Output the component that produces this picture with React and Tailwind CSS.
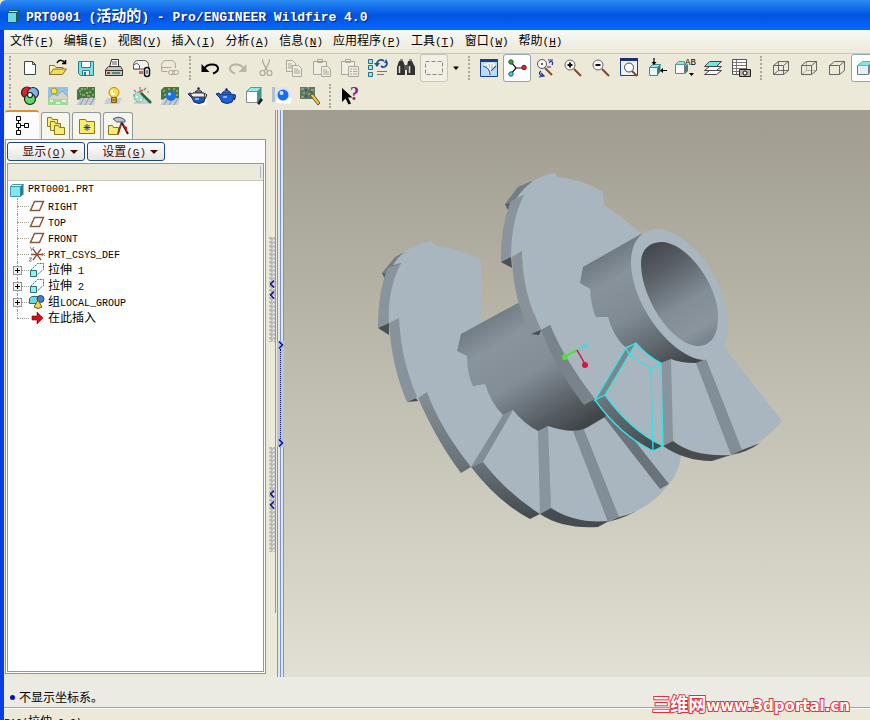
import React from 'react';

const LATIN = "font-['Liberation_Mono',monospace] text-[10px]";
const ACCEL = "font-['Liberation_Mono',monospace] text-[11px]";

const MENUS = [
  ['文件', 'F'], ['编辑', 'E'], ['视图', 'V'], ['插入', 'I'], ['分析', 'A'], ['信息', 'N'],
  ['应用程序', 'P'], ['工具', 'T'], ['窗口', 'W'], ['帮助', 'H'],
];

const TREE = [
  { icon: 'plane', latin: 'RIGHT' },
  { icon: 'plane', latin: 'TOP' },
  { icon: 'plane', latin: 'FRONT' },
  { icon: 'csys', latin: 'PRT_CSYS_DEF' },
  { icon: 'extrude', text: '拉伸', latin: ' 1', expandable: true },
  { icon: 'extrude', text: '拉伸', latin: ' 2', expandable: true },
  { icon: 'group', text: '组', latin: 'LOCAL_GROUP', expandable: true },
  { icon: 'insert', text: '在此插入' },
];

// All toolbar drawings share a 20x20 box
const ICONS = {
  new: <path d="M4.5 3.5h8l3 3v10h-11zM12.5 3.5v3h3" fill="#fff" stroke="#444" />,
  open: (
    <>
      <path d="M1.5 16.5v-9h5l1.5 2h7v3" fill="#fdf6b0" stroke="#8a7420" />
      <path d="M1.5 16.5l4-5.5h13l-4 5.5z" fill="#f2dc5a" stroke="#8a7420" />
      <path d="M9 5c2-4 6-3 8 0M17.5 2v3.5h-3.5" fill="none" stroke="#000" strokeWidth="1.5" />
    </>
  ),
  save: (
    <>
      <path d="M2.5 3.5h15v14h-13l-2-2z" fill="#7fe0e6" stroke="#2b7c8c" />
      <path d="M5.5 3.5h9v6h-9z" fill="#fff" stroke="#2b7c8c" />
      <path d="M6.5 12.5h7v5h-7z" fill="#eef" stroke="#2b7c8c" />
      <path d="M8 14h2v3h-2z" fill="#2b7c8c" />
    </>
  ),
  print: (
    <>
      <path d="M7.5 1.5h7v8h-9z" fill="#fff" stroke="#333" />
      <path d="M8 4h5M8 6h5" stroke="#555" />
      <path d="M1.5 11.5l3-3h12l2 3v6h-17z" fill="#c8c6bc" stroke="#333" />
      <path d="M2 12.5h16" stroke="#333" />
      <path d="M3 14h3v2h-3z" fill="#c22" />
      <path d="M8 14h8v2h-8z" fill="#4a8f7a" />
    </>
  ),
  mail: (
    <>
      <path d="M1.5 11V7.5q0-5 5-5h5q5 0 5 5V11z" fill="#f4f2ea" stroke="#555" />
      <path d="M7.5 11V7.5q-3-4-6 0V11z" fill="#fff" stroke="#555" />
      <path d="M7 13h4v3h-4z" fill="#c66" />
      <rect x="12.5" y="9.5" width="5" height="9" rx="2.5" fill="#fff" stroke="#111" strokeWidth="1.5" />
      <path d="M15 12v4" stroke="#111" />
    </>
  ),
  mailLink: (
    <g fill="none" stroke="#aaa798">
      <path d="M1.5 13V7.5q0-5 5-5h4q5 0 5 5V10M1.5 9.5h10M1.5 13.5h6" />
      <rect x="8.5" y="12.5" width="6" height="4" rx="2" />
      <rect x="12.5" y="12.5" width="6" height="4" rx="2" />
    </g>
  ),
  undo: (
    <>
      <path d="M4 11c3-6 14-6 14-.5 0 2-2 4-5 5" fill="none" stroke="#000" strokeWidth="2" />
      <path d="M1.5 6v8h8z" fill="#000" />
    </>
  ),
  redo: (
    <>
      <path d="M16 11c-3-6-14-6-14-.5 0 2 2 4 5 5" fill="none" stroke="#b8b5a5" strokeWidth="2" />
      <path d="M18.5 6v8h-8z" fill="#b8b5a5" />
    </>
  ),
  cut: (
    <g fill="none" stroke="#aaa798" strokeWidth="1.2">
      <path d="M6.5 1.5c0 4 2 6 5 11M13.5 1.5c0 4-2 6-5 11" />
      <circle cx="6.5" cy="15" r="2.5" />
      <circle cx="13.5" cy="15" r="2.5" />
    </g>
  ),
  copy: (
    <g fill="#f0eee2" stroke="#aaa798">
      <path d="M2.5 2.5h6l3 3v8h-9zM4 6h4M4 8h5M4 10h5" />
      <path d="M8.5 7.5h6l3 3v8h-9zM10 11h4M10 13h6M10 15h6" />
    </g>
  ),
  paste: (
    <g fill="#f0eee2" stroke="#aaa798">
      <path d="M1.5 3.5h13v13h-13zM5.5 1.5h5v3h-5z" />
      <path d="M9.5 8.5h6l3 3v7h-9zM11 12h4M11 14h6M11 16h6" />
    </g>
  ),
  pasteSpecial: (
    <g fill="#f0eee2" stroke="#aaa798">
      <path d="M1.5 3.5h13v13h-13zM5.5 1.5h5v3h-5z" />
      <path d="M8.5 8.5h10v10h-10zM10 11h2M13 11h4M10 13.5h2M13 13.5h4M10 16h2M13 16h4" />
    </g>
  ),
  regen: (
    <>
      <path d="M.5 1.5h4v4h-4zM.5 7.5h4v4h-4zM.5 14.5h4v4h-4z" fill="#8ff0f0" stroke="#2b6c7c" />
      <path d="M9 6c0-4 4-5 7-3M19 5c0 4-4 5-6 3" fill="none" stroke="#1f4f9c" strokeWidth="1.8" />
      <path d="M6 5h6l-3 4zM16 5h4l-2-4z" fill="#1f4f9c" />
      <path d="M9 13.5h10M9 16.5h7" stroke="#777" />
    </>
  ),
  find: (
    <>
      <path d="M3 3h4l2 5v9h-8v-8zM12 3h4l3 6v8h-8v-9z" fill="#333" />
      <path d="M8 7h4v5h-4z" fill="#555" />
      <path d="M3.5 8v7M13.5 8v7" stroke="#ddd" strokeWidth="1.5" />
      <path d="M4 2h3M13 2h3" stroke="#333" />
    </>
  ),
  select: <path d="M1.5 3.5h17v13h-17z" fill="none" stroke="#8d8b80" strokeDasharray="4 2" />,
  repaint: (
    <>
      <path d="M1.5 1.5h17v17h-17z" fill="#b5dcf8" stroke="#1d3f86" />
      <path d="M1 1h18v3h-18z" fill="#1d3f86" />
      <path d="M3 8Q8 4 15 5L17 9L10 17Q9 10 3 8z" fill="#fff" />
      <path d="M4 8q7 2 7 9M17 8l-5 5" fill="none" stroke="#3a5a7c" strokeWidth="1.2" />
      <path d="M7 7l1 2M10 6l1 4M13 6v5" stroke="#9ab" />
    </>
  ),
  spin: (
    <>
      <path d="M4 4l5 6h8M9 10l-5 6" fill="none" stroke="#111" strokeWidth="1.2" />
      <circle cx="4" cy="4" r="2.2" fill="#3aa04a" stroke="#145c22" />
      <circle cx="17" cy="9.5" r="2.2" fill="#e0242c" stroke="#7c1014" />
      <circle cx="4" cy="16" r="2.2" fill="#4fd0dc" stroke="#146070" />
    </>
  ),
  orient: (
    <>
      <path d="M10 10l7 7" stroke="#8a4a2a" strokeWidth="2" />
      <circle cx="7" cy="6" r="4.5" fill="#f8f8f4" stroke="#555" />
      <circle cx="7" cy="6" r="1" fill="#333" />
      <path d="M13 2h5M14 5c2-3 5-1 3 2M12 9h4M6 13c-3 2-1 5 2 5M4 19l5-1-3-3" fill="none" stroke="#1f2f9c" strokeWidth="1.2" />
    </>
  ),
  zoomIn: (
    <>
      <path d="M11 11l7 7" stroke="#7a4a32" strokeWidth="2" />
      <circle cx="7" cy="7" r="5" fill="#fafaf6" stroke="#666" />
      <path d="M4.5 7h5M7 4.5v5" stroke="#111" strokeWidth="2" />
    </>
  ),
  zoomOut: (
    <>
      <path d="M11 11l7 7" stroke="#7a4a32" strokeWidth="2" />
      <circle cx="7" cy="7" r="5" fill="#fafaf6" stroke="#666" />
      <path d="M4.5 7h5" stroke="#111" strokeWidth="2" />
    </>
  ),
  refit: (
    <>
      <path d="M1.5 1.5h17v16h-17z" fill="#eef2fa" stroke="#1d3f86" />
      <path d="M1 0h18v3h-18z" fill="#1d2f76" />
      <path d="M13 13l5 5" stroke="#7a4a32" strokeWidth="2" />
      <circle cx="10" cy="9.5" r="4.5" fill="#fff" stroke="#444" />
    </>
  ),
  reorient: (
    <>
      <path d="M2.5 9.5h8v8h-8z" fill="#e8fafa" stroke="#4a8a8c" />
      <path d="M2.5 9.5l3-3h8l-3 3z" fill="#8fe6e6" stroke="#4a8a8c" />
      <path d="M10.5 9.5l3-3v7l-3 4z" fill="#3a7a7c" />
      <path d="M7 0v6M20 12.5h-6" stroke="#000" strokeWidth="1.2" />
      <path d="M4.5 4h5l-2.5 3zM13 12.5l3-2.5v5z" fill="#000" />
    </>
  ),
  layers: (
    <g stroke="#444">
      <path d="M1.5 16.5l5-4h12l-5 4z" fill="#fff" />
      <path d="M1.5 12.5l5-4h12l-5 4z" fill="#fff" />
      <path d="M1.5 8.5l5-5h12l-5 5z" fill="#6fe6e6" />
    </g>
  ),
  viewManager: (
    <>
      <path d="M1.5 1.5h14v15h-14z" fill="#fff" stroke="#555" />
      <path d="M2 4.5h13M2 7.5h13M2 10.5h13M2 13.5h13M5.5 2v14" stroke="#777" />
      <path d="M8.5 11.5h11v7h-11z" fill="#b8b6aa" stroke="#222" />
      <circle cx="14" cy="15" r="2" fill="#fff" stroke="#111" />
    </>
  ),
  wireframe: (
    <path d="M2.5 7.5h10v9h-10zM7.5 3.5h10v9h-10zM2.5 7.5l5-4M12.5 7.5l5-4M12.5 16.5l5-4M2.5 16.5l5-4" fill="none" stroke="#666" />
  ),
  hidden: (
    <>
      <path d="M7.5 3.5v9h10M2.5 16.5l5-4" fill="none" stroke="#b2afa2" />
      <path d="M2.5 7.5h10v9h-10zM2.5 7.5l5-4h10v9l-5 4M12.5 7.5l5-4" fill="none" stroke="#666" />
    </>
  ),
  noHidden: <path d="M2.5 7.5h10v9h-10zM2.5 7.5l5-4h10v9l-5 4M12.5 7.5l5-4" fill="none" stroke="#666" />,
  shaded: (
    <>
      <path d="M2.5 7.5h11v9h-11z" fill="#e8eeee" stroke="#778" />
      <path d="M2.5 7.5l5-4h11l-5 4z" fill="#7fe6e6" stroke="#7aa" />
      <path d="M13.5 7.5l5-4v9l-5 4z" fill="#6a8a8c" />
    </>
  ),
  colors: (
    <g strokeWidth="1.2" stroke="#222">
      <circle cx="7" cy="6.5" r="5.5" fill="#d8242c" />
      <circle cx="13" cy="7" r="5.5" fill="#7fb4ee" />
      <circle cx="10" cy="13" r="5.5" fill="#5fd86a" />
      <circle cx="10" cy="9" r="2.5" fill="#fff" />
    </g>
  ),
  scene: (
    <>
      <path d="M0 1h20v12h-20z" fill="#8cc4ee" />
      <path d="M0 12l6-4 3 2 5-5 6 6v4h-20z" fill="#d8d4cc" stroke="#8a8a86" strokeWidth=".5" />
      <circle cx="6" cy="5" r="3" fill="#f8e23a" stroke="#b49a10" />
      <path d="M0 13h20v6h-20z" fill="#9edb9a" />
      <path d="M2 15h3M8 17h4M14 15h4" stroke="#e8f8e0" strokeWidth="2" />
    </>
  ),
  room: (
    <>
      <path d="M1 14V4l3-3h15v12H5z" fill="#3f7a46" />
      <path d="M3 5h2M8 3h2M13 6h2M6 9h3M11 10h3M16 3h2M16 9h2" stroke="#c8a84a" strokeWidth="1.5" />
      <path d="M5 3h2M11 2h1M4 8h1M10 7h2M14 12h3" stroke="#8ad08a" strokeWidth="1.5" />
      <path d="M0 19l5-7h15l-2 7z" fill="#c6cdd6" />
      <path d="M4 19l4-7M9 19l4-7M14 19l4-7" stroke="#8a94a4" />
    </>
  ),
  bulb: (
    <>
      <path d="M0 18l3-6h15l-3 6z" fill="#c6cdd6" />
      <circle cx="10" cy="6.5" r="5" fill="#f9dc50" stroke="#b88c18" />
      <path d="M8 4v4h3" fill="none" stroke="#fff" strokeWidth="1.5" />
      <path d="M7.5 11.5h5v5h-5z" fill="#d8a83a" stroke="#7a5a10" />
      <path d="M8 14h4" stroke="#7a5a10" />
    </>
  ),
  wand: (
    <>
      <path d="M1 18l4-5h14l-3 5z" fill="#c6cdd6" />
      <circle cx="7" cy="11" r="5" fill="#a8dfc8" stroke="#68a898" strokeDasharray="2 1" />
      <path d="M9 7l10 10" stroke="#1f6a3c" strokeWidth="2.5" />
      <path d="M8 1v3M2 4l2 2M14 2l-2 2M1 9h2M15 6h2" stroke="#7a8a7a" strokeWidth="1.2" />
      <path d="M7 6l4-2" stroke="#d84a4a" strokeWidth="1.5" />
      <path d="M4 11h2M8 14h2" stroke="#fff" strokeWidth="2" />
    </>
  ),
  roomBall: (
    <>
      <path d="M1 14V4l3-3h15v12H5z" fill="#3f7a46" />
      <path d="M3 5h2M8 3h2M13 3h2M4 9h2M16 5h2M16 9h2" stroke="#c8a84a" strokeWidth="1.5" />
      <path d="M0 19l5-7h15l-2 7z" fill="#c6cdd6" />
      <path d="M4 19l4-7M9 19l4-7M14 19l4-7" stroke="#8a94a4" />
      <circle cx="11" cy="10" r="5" fill="#1f6fe0" />
      <circle cx="9.5" cy="8" r="1.5" fill="#b8dcff" />
    </>
  ),
  teapotHalf: (
    <>
      <path d="M9 8h10v11h-13z" fill="#fff" />
      <path d="M5 7h11l1 4-1 5q-5 3-10 0l-2-4-4-4 3-1 2 2z" fill="#1f55c8" stroke="#0c2a78" />
      <path d="M1 7l3 1 1-1h11l1 4h-12z" fill="#eee" stroke="#444" />
      <path d="M7 6q4-4 7 0z" fill="#ddd" stroke="#222" />
      <path d="M16 8q5-1 1 5" fill="none" stroke="#222" />
      <circle cx="10.5" cy="2.5" r="1.2" fill="#222" />
      <path d="M7 13h4" stroke="#a8ccff" strokeWidth="1.5" />
    </>
  ),
  teapot: (
    <>
      <path d="M5 8h11l2 3-2 5q-5 3-10 0l-2-4-4-4 3-1 2 2z" fill="#1a62d6" stroke="#0c2a78" />
      <path d="M6 7q5-5 9 0z" fill="#3a84ee" stroke="#0c2a78" />
      <path d="M17 9q4-1 1 5" fill="none" stroke="#0c2a78" strokeWidth="1.5" />
      <circle cx="10.5" cy="3.5" r="1.2" fill="#0c2a78" />
      <path d="M7 11h4" stroke="#a8ccff" strokeWidth="1.5" />
    </>
  ),
  cubeBrush: (
    <>
      <path d="M2.5 5.5h11v11h-11z" fill="#fff" stroke="#889" />
      <path d="M2.5 5.5l4-4h11l-4 4z" fill="#8feaea" stroke="#5a9a9a" />
      <path d="M13.5 5.5l4-4v11l-4 4z" fill="#4a8f92" />
      <path d="M13 17l4-5 2 2-4 5z" fill="#222" />
    </>
  ),
  ballTile: (
    <>
      <path d="M0 1h14l5 5v12h-17z" fill="#dfe4ee" />
      <path d="M0 1h3v15h-3z" fill="#b4bfd2" />
      <path d="M3 17l3-5h14l-2 6z" fill="#fff" />
      <circle cx="11" cy="9" r="5.5" fill="#1a6cee" />
      <circle cx="9.5" cy="7" r="2" fill="#cfe8ff" />
    </>
  ),
  texture: (
    <>
      <path d="M0 1h15v12h-15z" fill="#5c7a5a" />
      <path d="M1 3h3M7 2h2M11 4h3M3 7h2M8 8h3M1 11h3M12 10h2" stroke="#b49a9a" strokeWidth="1.5" />
      <path d="M5 4h2M10 6h2M5 10h2" stroke="#3a4a8a" strokeWidth="1.5" />
      <path d="M10 9l3-1 7 9-2 2z" fill="#e8cc5a" stroke="#6a5410" />
    </>
  ),
  help: <path d="M2 2v14l3.500-3.500 3 6 2.500-1-3-6h4.500z" fill="#000" />,
};

const FILE_TOOLS = [['new', '新建'], ['open', '打开'], ['save', '保存'], ['print', '打印'], ['mail', '发送邮件'], ['mailLink', '发送链接']];
const EDIT_TOOLS = [['undo', '撤消'], ['redo', '重做'], ['cut', '剪切'], ['copy', '复制'], ['paste', '粘贴'], ['pasteSpecial', '选择性粘贴'], ['regen', '再生'], ['find', '查找']];
const RENDER_TOOLS = [
  ['colors', '外观'], ['scene', '场景'], ['room', '房间'], ['bulb', '光源'], ['wand', '效果'], ['roomBall', '房间编辑'],
  ['teapotHalf', '渲染设置'], ['teapot', '渲染'], ['cubeBrush', '透视'], ['ballTile', '图像'], ['texture', '纹理'],
];

function ToolButton({ icon, label, className = '', children }) {
  return (
    <button type="button" aria-label={label} className={`w-7 h-7 shrink-0 flex items-center justify-center rounded-[3px] ${className}`}>
      {children || <svg className="w-5 h-5 shrink-0" viewBox="0 0 20 20">{ICONS[icon]}</svg>}
    </button>
  );
}

function Tools({ items }) {
  return items.map(([icon, label]) => <ToolButton key={icon} icon={icon} label={label} />);
}

function Grip() {
  return (
    <div className="w-3 shrink-0 flex justify-center">
      <div className="h-6 border-l-2 border-dotted border-[#a9a797]" />
    </div>
  );
}

function TreeIcon({ name }) {
  return (
    <svg className="w-4 h-4 shrink-0" viewBox="0 0 16 16">
      {name === 'plane' && <path d="M5.5 3.5h9l-4 9h-9z" fill="#fff" stroke="#8a5a3c" strokeWidth="1.5" />}
      {name === 'csys' && (
        <>
          <path d="M2 8.5h12M4 3l8 11M12 3l-8 11" stroke="#8a5030" strokeWidth="1.3" />
          <path d="M1 1l2 3M5 1l-3 4M13 7l3 3M16 7l-3 3M0 12h3l-3 3h3" fill="none" stroke="#888" />
        </>
      )}
      {name === 'extrude' && (
        <>
          <path d="M1.5 8.5l7-7h6v6l-7 6" fill="#f4ffff" stroke="#2f6c74" strokeDasharray="2 1" />
          <path d="M1.5 8.5h6v6h-6z" fill="#8ff4f4" stroke="#2f6c74" />
        </>
      )}
      {name === 'group' && (
        <>
          <path d="M.5 4.5l2-2h7v7h-9z" fill="#6fd8dc" stroke="#2f6c74" />
          <circle cx="11.5" cy="5" r="3.5" fill="#4a7cc8" stroke="#1f3f7c" />
          <path d="M9 6l4 7q-4 3-8 0z" fill="#f0d850" stroke="#6a5a18" />
        </>
      )}
      {name === 'insert' && <path d="M3 6h5V2l6 6-6 6v-4H3z" fill="#d80c14" stroke="#7c0408" strokeWidth=".6" />}
    </svg>
  );
}

function TreeRow({ item, last }) {
  return (
    <li className="h-4 flex items-center">
      <div className="relative w-4 h-4 shrink-0 flex items-center">
        <span className={`absolute left-1 top-0 border-l border-dotted border-[#9a9a92] ${last ? 'h-2' : 'h-4'}`} />
        <span className="ml-1 w-3 border-t border-dotted border-[#9a9a92]" />
        {item.expandable && (
          <button
            type="button"
            aria-label="展开"
            className="absolute left-0 top-1 w-[9px] h-[9px] border border-[#8a98a8] bg-[#f4f2ea]"
          >
            <svg className="w-[7px] h-[7px]" viewBox="0 0 7 7"><path d="M1 3.500h5M3.500 1v5" stroke="#000" /></svg>
          </button>
        )}
      </div>
      <TreeIcon name={item.icon} />
      <span className="ml-[3px] whitespace-pre leading-4">
        {item.text}
        <span className={LATIN}>{item.latin}</span>
      </span>
    </li>
  );
}

function PanelButton({ text, letter }) {
  return (
    <button
      type="button"
      className="w-[78px] h-[19px] flex items-center justify-end gap-1 pr-1.5 rounded-[3px] border border-[#1c4a80] bg-gradient-to-b from-white to-[#e6e4dc] text-[#3c0c0c]"
    >
      <span className="leading-4 whitespace-nowrap">
        {text}
        <span className={ACCEL}>(<u>{letter}</u>)</span>
      </span>
      <svg className="w-2 h-2" viewBox="0 0 8 8"><path d="M0 2h8L4 6z" fill="#3c0c0c" /></svg>
    </button>
  );
}

function Folder({ x, y }) {
  return <path d={`M${x} ${y}h4l1 2h5v7h-10z`} fill="#f6ea7a" stroke="#8a7820" />;
}

function ModelTree() {
  return (
    <aside className="w-[261px] shrink-0 flex flex-col">
      <div className="h-[29px] flex items-stretch gap-0.5" role="tablist">
        <button type="button" role="tab" aria-selected="true" aria-label="模型树" className="w-[34px] bg-[#fcfcfe] border-t-2 border-[#e68b2c] rounded-t-[3px] flex justify-center items-center">
          <svg className="w-5 h-5" viewBox="0 0 20 20">
            <path d="M4.500.5h4v4h-4zM4.500 7.500h4v4h-4zM12.500 7.500h4v4h-4zM4.500 14.500h4v4h-4zM9 9.500h3M6.500 5v2M6.500 12v2" fill="#fff" stroke="#000" />
          </svg>
        </button>
        <button type="button" role="tab" aria-label="文件夹浏览器" className="w-[29px] mt-0.5 bg-[#f6f5ee] border border-b-0 border-[#919b9c] rounded-t-[3px] flex justify-center items-center">
          <svg className="w-5 h-5" viewBox="0 0 20 20"><Folder x={1.5} y={1.5} /><Folder x={4.5} y={5.5} /><Folder x={8.5} y={9.5} /></svg>
        </button>
        <button type="button" role="tab" aria-label="收藏夹" className="w-[29px] mt-0.5 bg-[#f6f5ee] border border-b-0 border-[#919b9c] rounded-t-[3px] flex justify-center items-center">
          <svg className="w-5 h-5" viewBox="0 0 20 20">
            <path d="M2.5 3.5h6l1 2h8v12h-15z" fill="#f8ee6a" stroke="#8a7820" />
            <path d="M10 8v7M6.5 11.500h7M7.5 9l5 5M12.5 9l-5 5" stroke="#1a3a9c" />
          </svg>
        </button>
        <button type="button" role="tab" aria-label="连接" className="w-[30px] mt-0.5 bg-[#f6f5ee] border border-b-0 border-[#919b9c] rounded-t-[3px] flex justify-center items-center">
          <svg className="w-[22px] h-5" viewBox="0 0 22 20">
            <Folder x={1.5} y={9.5} />
            <path d="M11 18L15 5" stroke="#8a3a20" strokeWidth="2" />
            <path d="M6 3q6-4 12 1v2h-8z" fill="#b8c6d4" stroke="#4a5a6a" />
            <path d="M15 7l6 11" stroke="#222" strokeWidth="2" />
            <path d="M16 9l4 2v6z" fill="#c01820" />
          </svg>
        </button>
      </div>

      <div className="flex-1 min-h-0 flex flex-col border border-[#7f9db9] bg-[#fcfcfe] p-px pt-0.5">
        <div className="flex gap-0.5 pb-0.5">
          <PanelButton text="显示" letter="O" />
          <PanelButton text="设置" letter="G" />
        </div>
        <div className="flex-1 min-h-0 flex flex-col border border-[#7f9db9] bg-white">
          <div className="h-[17px] shrink-0 bg-[#ebeadb] border-b border-[#cbc7b8] flex justify-end py-0.5 pr-0.5">
            <div className="border-r border-[#a8b8c4]" />
          </div>
          <div className="pt-px pl-[2px]">
            <div className="h-4 flex items-center">
              <svg className="w-[14px] h-4" viewBox="0 0 14 16">
                <path d="M.5 4.500h10v10h-10z" fill="#7fe8ec" stroke="#3f9ca4" />
                <path d="M.5 4.500l2-2h11l-3 2z" fill="#d4fcfc" stroke="#3f9ca4" />
                <path d="M10.5 4.500l3-2v10l-3 2z" fill="#2f7c84" />
              </svg>
              <span className={`ml-1 leading-4 ${LATIN}`}>PRT0001.PRT</span>
            </div>
            <ul className="pl-[3px]">
              {TREE.map((item, i) => (
                <TreeRow key={i} item={item} last={i === TREE.length - 1} />
              ))}
            </ul>
          </div>
        </div>
      </div>
    </aside>
  );
}

function Chevron({ d }) {
  return (
    <svg className="w-1.5 h-2 shrink-0" viewBox="0 0 6 8">
      <path d={d} fill="none" stroke="#0c0c9c" strokeWidth="1.5" />
    </svg>
  );
}

function SashGrip() {
  return (
    <div className="h-[105px] shrink-0 flex flex-col items-center justify-center gap-[3px] bg-[#b9bab8] bg-[linear-gradient(45deg,#ebebe6_25%,transparent_25%,transparent_75%,#ebebe6_75%)] bg-[size:4px_4px]">
      <Chevron d="M5 .5L1.500 4L5 7.500" />
      <Chevron d="M5 .5L1.500 4L5 7.500" />
    </div>
  );
}

function Sash() {
  return (
    <div className="w-[18px] shrink-0 flex items-start pl-[3px]">
      <div className="w-[7px] h-[503px] border-r border-[#8098d8] pt-[127px] flex flex-col gap-[105px]">
        <SashGrip />
        <SashGrip />
      </div>
      <div className="w-[7px] ml-px h-full flex flex-col">
        <div className="h-[231px] shrink-0 bg-[#e4e6ee] border-x border-[#7f94cc] flex justify-center">
          <div className="border-l border-[#7f94cc]" />
        </div>
        <div className="h-[106px] shrink-0 bg-[#b9c2e0] flex flex-col items-center justify-between">
          <Chevron d="M1 .5L4.500 4L1 7.500" />
          <div className="flex-1 border-l border-dotted border-[#0c0c50]" />
          <Chevron d="M1 .5L4.500 4L1 7.500" />
        </div>
        <div className="flex-1 bg-[#e4e6ee] border-x border-[#7f94cc] flex justify-center">
          <div className="border-l border-[#7f94cc]" />
        </div>
      </div>
    </div>
  );
}

function Model() {
  return (
    <svg className="w-[586px] h-[567px] shrink-0" viewBox="284 110 586 567" role="img" aria-label="螺旋零件模型">
      <defs>
        <linearGradient id="rearShaft" gradientUnits="userSpaceOnUse" x1="485" y1="320" x2="556" y2="440">
          <stop offset="0" stopColor="#727c84" />
          <stop offset=".2" stopColor="#89949c" />
          <stop offset=".5" stopColor="#828d95" />
          <stop offset=".75" stopColor="#61696f" />
          <stop offset="1" stopColor="#414649" />
        </linearGradient>
        <linearGradient id="frontShaft" gradientUnits="userSpaceOnUse" x1="608" y1="252" x2="676" y2="368">
          <stop offset="0" stopColor="#6f7981" />
          <stop offset=".2" stopColor="#87929a" />
          <stop offset=".5" stopColor="#7f8a92" />
          <stop offset=".78" stopColor="#5f676d" />
          <stop offset="1" stopColor="#414649" />
        </linearGradient>
        <linearGradient id="bore" gradientUnits="userSpaceOnUse" x1="650" y1="246" x2="708" y2="342">
          <stop offset="0" stopColor="#43484c" />
          <stop offset=".25" stopColor="#596066" />
          <stop offset=".6" stopColor="#828d95" />
          <stop offset=".85" stopColor="#89949c" />
          <stop offset="1" stopColor="#77828a" />
        </linearGradient>
        <linearGradient id="rim" gradientUnits="userSpaceOnUse" x1="0" y1="395" x2="0" y2="520">
          <stop offset="0" stopColor="#828d95" />
          <stop offset=".55" stopColor="#6a737a" />
          <stop offset="1" stopColor="#43494d" />
        </linearGradient>
        <linearGradient id="wedgeRim" gradientUnits="userSpaceOnUse" x1="600" y1="396" x2="655" y2="448">
          <stop offset="0" stopColor="#6e777e" />
          <stop offset="1" stopColor="#43494d" />
        </linearGradient>
      </defs>

      {/* rear flight */}
      <path d="M408 250L395 257L382 273L385 279L402 263z" fill="#737d84" />
      <path d="M382 273L385 279L390 274z" fill="#5a6268" />
      <path d="M431 241L434 244L437 246Q464 250 480 260L481 262L482 330L620 400L681 455Q679 473 669 484Q657 500 640 509L608 521Q570 527 551 510L540 514Q505 495 483 463L470 467Q436 425 426 393L417 398Q401 360 399 318L389 323Q387 290 401 263L393 265Q405 245 431 241z" fill="#a9b6bf" />
      <path d="M401 263L388 268Q378 290 378 328L389 323Q387 290 401 263z" fill="#89949c" />
      <path d="M378 328L389 323L389 335z" fill="#4a5156" />
      <path d="M399 318L389 323Q392 368 407 402L417 397Q401 360 399 318z" fill="#87929a" />
      <path d="M407 402L416 398L418 401z" fill="#464c50" />
      <path d="M427 392L418 398Q438 443 461 473L471 467Q440 428 427 392z" fill="url(#rim)" />
      <path d="M513 410L503 415L471 467L483 462z" fill="#828d95" />
      <path d="M483 462L471 467Q498 502 530 519L540 514Q507 493 483 462z" fill="url(#rim)" />
      <path d="M548 426L538 431L540 514L551 508z" fill="#89949c" />
      <path d="M551 508L540 514Q562 529 598 527L609 521Q575 524 551 508z" fill="#464c50" />
      <path d="M583 427L573 431L608 522L619 517z" fill="#828d95" />
      <path d="M608 522L619 517Q632 514 641 508Q628 517 608 522z" fill="#464c50" />
      <path d="M600 412L612 412L669 484L660 489z" fill="#6a737a" />
      <path d="M518 303L461 334L457 351L467 356Q467 374 473 386L485 384Q491 403 503 415L513 410Q523 423 538 431L548 426Q574 435 588 427L605 417L620 370z" fill="url(#rearShaft)" />

      {/* front flight */}
      <path d="M532 181L518 187L505 204L508 210L524 195z" fill="#737d84" />
      <path d="M505 204L508 210L514 203z" fill="#5a6268" />
      <path d="M555 173L557 177Q582 179 603 192L604 205Q622 216 641 234L724 347L782 421Q765 442 742 450L731 455Q695 461 673 441L663 446L595 400Q565 360 550 325L541 330Q524 293 522 251L511 256Q511 220 524 195L516 199Q530 177 555 173z" fill="#a9b6bf" />
      <path d="M524 195L511 201Q500 228 501 262L511 257Q511 220 524 195z" fill="#89949c" />
      <path d="M501 262L511 257L512 268z" fill="#4a5156" />
      <path d="M522 251L512 257Q513 301 532 334L541 330Q522 292 522 251z" fill="#87929a" />
      <path d="M531 334L541 330L539 335z" fill="#464c50" />
      <path d="M550 325L541 330Q558 373 584 405L595 399Q565 362 550 325z" fill="#78838a" />
      <path d="M671 359L661 363L663 446L673 441z" fill="#89949c" />
      <path d="M673 441L663 446Q685 461 712 461L731 455Q693 457 673 441z" fill="#464c50" />
      <path d="M706 359L696 363L731 455L742 450z" fill="#828d95" />
      <path d="M731 455L742 450L760 443Q748 452 731 455z" fill="#464c50" />

      {/* hub */}
      <path d="M641 234L583 267L580 283L590 289Q591 307 596 317L608 317Q613 336 625 347L636 343Q647 356 661 363L671 359Q680 363 696 363L706 359L715 320z" fill="url(#frontShaft)" />
      <path d="M631 262C631 240 643 229 657 229C688 229 728 280 728 325C728 349 721 360 703 360C672 357 631 305 631 262z" fill="#a9b6bf" />
      <path d="M641 263C641 250 649 242 662 242C688 243 718 286 718 316C718 336 711 346 697 346C671 344 641 298 641 263z" fill="url(#bore)" />

      {/* highlighted segment */}
      <path d="M636 343L626 348L595 400L605 395z" fill="#7b868d" />
      <path d="M605 395L595 400Q620 435 653 451L663 446Q630 430 605 395z" fill="url(#wedgeRim)" />
      <g fill="none" stroke="#35e2e6" strokeWidth="1.3">
        <path d="M636 343L626 348L595 400L605 395L636 343Q648 357 661 363L663 446Q630 430 605 395" />
        <path d="M595 400Q620 435 653 451L663 446M626 348L629 354L651 369L653 451M651 369L661 363" />
      </g>

      {/* spin centre */}
      <path d="M577 350L566 356" stroke="#52e03c" strokeWidth="2" />
      <path d="M577 350L585 346" stroke="#3fdce8" />
      <path d="M577 350L585 364" stroke="#c81440" strokeWidth="1.5" />
      <circle cx="565" cy="357" r="3" fill="#52e03c" />
      <path d="M580 345h5l3-2v5h-5z" fill="#3fdce8" />
      <circle cx="585" cy="365" r="3" fill="#dc1440" />
    </svg>
  );
}

export default function App() {
  return (
    <div className="relative h-screen flex flex-col overflow-hidden bg-[#ece9d8] text-black text-[12px] font-['Noto_Sans_CJK_SC',sans-serif]">
      <header className="h-[30px] shrink-0 rounded-tl-[6px] flex items-center gap-1.5 pl-[7px] pt-0.5 bg-gradient-to-b from-[#2b8bf4] via-[#0453e0] to-[#0468fc]">
        <svg className="w-[13px] h-[13px]" viewBox="0 0 13 13">
          <path d="M.5 2.500h9v10h-9z" fill="#6fd8dc" stroke="#0f5a70" />
          <path d="M.5 2.500l2-2h10l-3 2z" fill="#c4f4f4" stroke="#0f5a70" />
          <path d="M9.5 2.500l3-2v9l-3 3z" fill="#1f5c6c" />
        </svg>
        <h1 className="text-white font-bold text-[15px] leading-5 whitespace-pre [text-shadow:1px_1px_1px_#0a1f80]">
          <span className="font-['Liberation_Mono',monospace] text-[13px]">PRT0001 (</span>
          活动的
          <span className="font-['Liberation_Mono',monospace] text-[13px]">) - Pro/ENGINEER Wildfire 4.0</span>
        </h1>
      </header>

      <div className="flex-1 min-h-0 flex flex-col border-l-4 border-[#0a3ee0]">
        <nav className="h-6 shrink-0 flex gap-2.5 pl-1.5 pt-0.5 bg-gradient-to-b from-[#f8f8f6] to-[#ece9d8] border-b border-[#cbc8b8]">
          {MENUS.map(([text, letter]) => (
            <button key={letter} type="button" className="shrink-0 h-4 leading-4 whitespace-nowrap">
              {text}
              <span className={ACCEL}>(<u>{letter}</u>)</span>
            </button>
          ))}
        </nav>

        <div className="h-7 shrink-0 flex items-center">
          <Grip />
          <Tools items={FILE_TOOLS} />
          <Grip />
          <Tools items={EDIT_TOOLS} />
          <ToolButton icon="select" label="选择" className="border border-[#c9c6b6] bg-[#f2f0e6]" />
          <button type="button" aria-label="选择选项" className="w-[15px] shrink-0 flex justify-center">
            <svg className="w-1.5 h-1.5" viewBox="0 0 6 6"><path d="M0 1.500h6L3 5z" /></svg>
          </button>
          <Grip />
          <ToolButton icon="repaint" label="重画" />
          <ToolButton icon="spin" label="旋转中心" className="border border-[#8fa6b4] bg-white" />
          <ToolButton icon="orient" label="定向模式" />
          <ToolButton icon="zoomIn" label="放大" />
          <ToolButton icon="zoomOut" label="缩小" />
          <ToolButton icon="refit" label="重新调整" />
          <ToolButton icon="reorient" label="重定向" />
          <ToolButton label="已保存视图">
            <svg className="w-[22px] h-5" viewBox="0 0 22 20">
              <path d="M1.5 6.500h9v9h-9z" fill="#fff" stroke="#778" />
              <path d="M1.5 6.500l3-3h6v3z" fill="#8fe6e6" stroke="#5a9a9a" />
              <path d="M11 8l3-2v7l-3 3z" fill="#4a7a7c" />
              <text x="11" y="7" fontSize="9" fontFamily="Liberation Mono">AB</text>
              <path d="M15 15h5l-2.500 3z" />
            </svg>
          </ToolButton>
          <ToolButton icon="layers" label="层" />
          <ToolButton icon="viewManager" label="视图管理器" />
          <Grip />
          <ToolButton icon="wireframe" label="线框" />
          <ToolButton icon="hidden" label="隐藏线" />
          <ToolButton icon="noHidden" label="无隐藏线" />
          <ToolButton icon="shaded" label="着色" className="border border-[#8fa6b4] bg-white" />
        </div>

        <div className="h-7 shrink-0 flex items-center">
          <Grip />
          <Tools items={RENDER_TOOLS} />
          <Grip />
          <ToolButton label="上下文帮助">
            <svg className="w-5 h-5" viewBox="0 0 20 20">
              {ICONS.help}
              <text x="10" y="14" fontSize="18" fontWeight="bold" fill="#8a1a8c" fontFamily="Liberation Serif">?</text>
            </svg>
          </ToolButton>
        </div>

        <div className="flex-1 min-h-0 flex">
          <div className="flex pb-[3px] pl-px"><ModelTree /></div>
          <Sash />
          <main className="flex-1 min-w-0 overflow-hidden bg-gradient-to-b from-[#a09d90] to-[#e2dfd4]">
            <Model />
          </main>
        </div>

        <footer className="h-[43px] shrink-0 flex flex-col overflow-hidden">
          <p className="h-[31px] shrink-0 flex items-center gap-1 pl-1.5 pt-2.5 bg-[#ebebe4] border-b border-[#a5a396] leading-5">
            <span className="w-[5px] h-[5px] rounded-full bg-[#0c0cb4]" />
            不显示坐标系。
          </p>
          <p className="h-5 shrink-0 pt-1 leading-4 border-t border-white">
            <span className={LATIN}>F10(</span>拉伸<span className={LATIN}>_2_2)</span>
          </p>
        </footer>
      </div>

      <a
        href="#3dportal"
        className="absolute right-5 bottom-1 leading-5 whitespace-nowrap text-white font-bold [-webkit-text-stroke:2px_#e0303c] [paint-order:stroke_fill]"
      >
        <span className="text-[18px]">三维网</span>
        <span className="text-[15px] font-['DejaVu_Sans',sans-serif]">www.3dportal.cn</span>
      </a>
    </div>
  );
}
